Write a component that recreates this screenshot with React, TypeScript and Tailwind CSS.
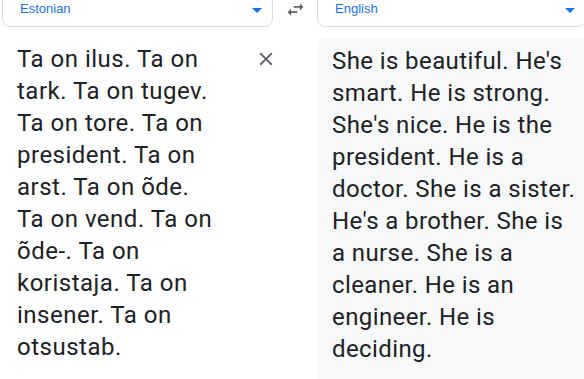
import React from "react";

const ArrowDrop = () => (
  <svg width="10" height="5" viewBox="0 0 10 5" className="block">
    <path d="M0 0l5 5 5-5z" fill="#1a73e8" />
  </svg>
);

const SwapIcon = () => (
  <svg width="21" height="21" viewBox="0 0 24 24" className="block">
    <path
      d="M6.99 11L3 15l3.99 4v-3H14v-2H6.99v-3zM21 9l-3.99-4v3H10v2h7.01v3L21 9z"
      fill="#5f6368"
    />
  </svg>
);

const CloseIcon = () => (
  <svg width="22" height="22" viewBox="0 0 24 24" className="block">
    <path
      d="M19 6.41L17.59 5 12 10.59 6.41 5 5 6.41 10.59 12 5 17.59 6.41 19 12 13.41 17.59 19 19 17.59 13.41 12z"
      fill="#5f6368"
    />
  </svg>
);

const LangBox = ({ label, width }: { label: string; width: string }) => (
  <div
    className={`${width} h-[27px] shrink-0 border border-t-0 border-[#dadce0] rounded-b-lg flex justify-between pl-[17px] pr-[10px]`}
  >
    <span
      className="pt-[2px] text-[13px] leading-[14px] text-[#1a73e8]"
      style={{ fontFamily: '"Liberation Sans", Arial, sans-serif' }}
    >
      {label}
    </span>
    <span className="pt-[8px]">
      <ArrowDrop />
    </span>
  </div>
);

const leftLines = [
  "Ta on ilus. Ta on",
  "tark. Ta on tugev.",
  "Ta on tore. Ta on",
  "president. Ta on",
  "arst. Ta on õde.",
  "Ta on vend. Ta on",
  "õde-. Ta on",
  "koristaja. Ta on",
  "insener. Ta on",
  "otsustab.",
];

const rightLines = [
  "She is beautiful. He's",
  "smart. He is strong.",
  "She's nice. He is the",
  "president. He is a",
  "doctor. She is a sister.",
  "He's a brother. She is",
  "a nurse. She is a",
  "cleaner. He is an",
  "engineer. He is",
  "deciding.",
];

export default function App() {
  return (
    <div
      className="w-[584px] h-[379px] overflow-hidden bg-white flex flex-col"
      style={{ fontFamily: "Roboto, sans-serif" }}
    >
      <div className="flex h-[27px] shrink-0 pl-[2px]">
        <LangBox label="Estonian" width="w-[271px]" />
        <div className="w-[44px] shrink-0 flex justify-center mt-[-1px]">
          <SwapIcon />
        </div>
        <LangBox label="English" width="w-[269px]" />
      </div>
      <div className="flex flex-1 min-h-0">
        <div className="w-[317px] shrink-0 flex pl-[17px] pt-[16px]">
          <div className="w-[238px] text-[24px] leading-[32px] tracking-[0.5px] text-[#202124]">
            {leftLines.map((l, i) => (
              <div key={i} className="whitespace-nowrap">
                {l}
              </div>
            ))}
          </div>
          <button className="mt-[5px] h-[22px]">
            <CloseIcon />
          </button>
        </div>
        <div className="flex-1 mt-[11px] bg-[#f8f9fa] rounded-tl-lg pl-[15px] pt-[7px]">
          <div className="text-[24px] leading-[32px] tracking-[0.4px] text-[#202124]">
            {rightLines.map((l, i) => (
              <div key={i} className="whitespace-nowrap">
                {l}
              </div>
            ))}
          </div>
        </div>
      </div>
    </div>
  );
}
